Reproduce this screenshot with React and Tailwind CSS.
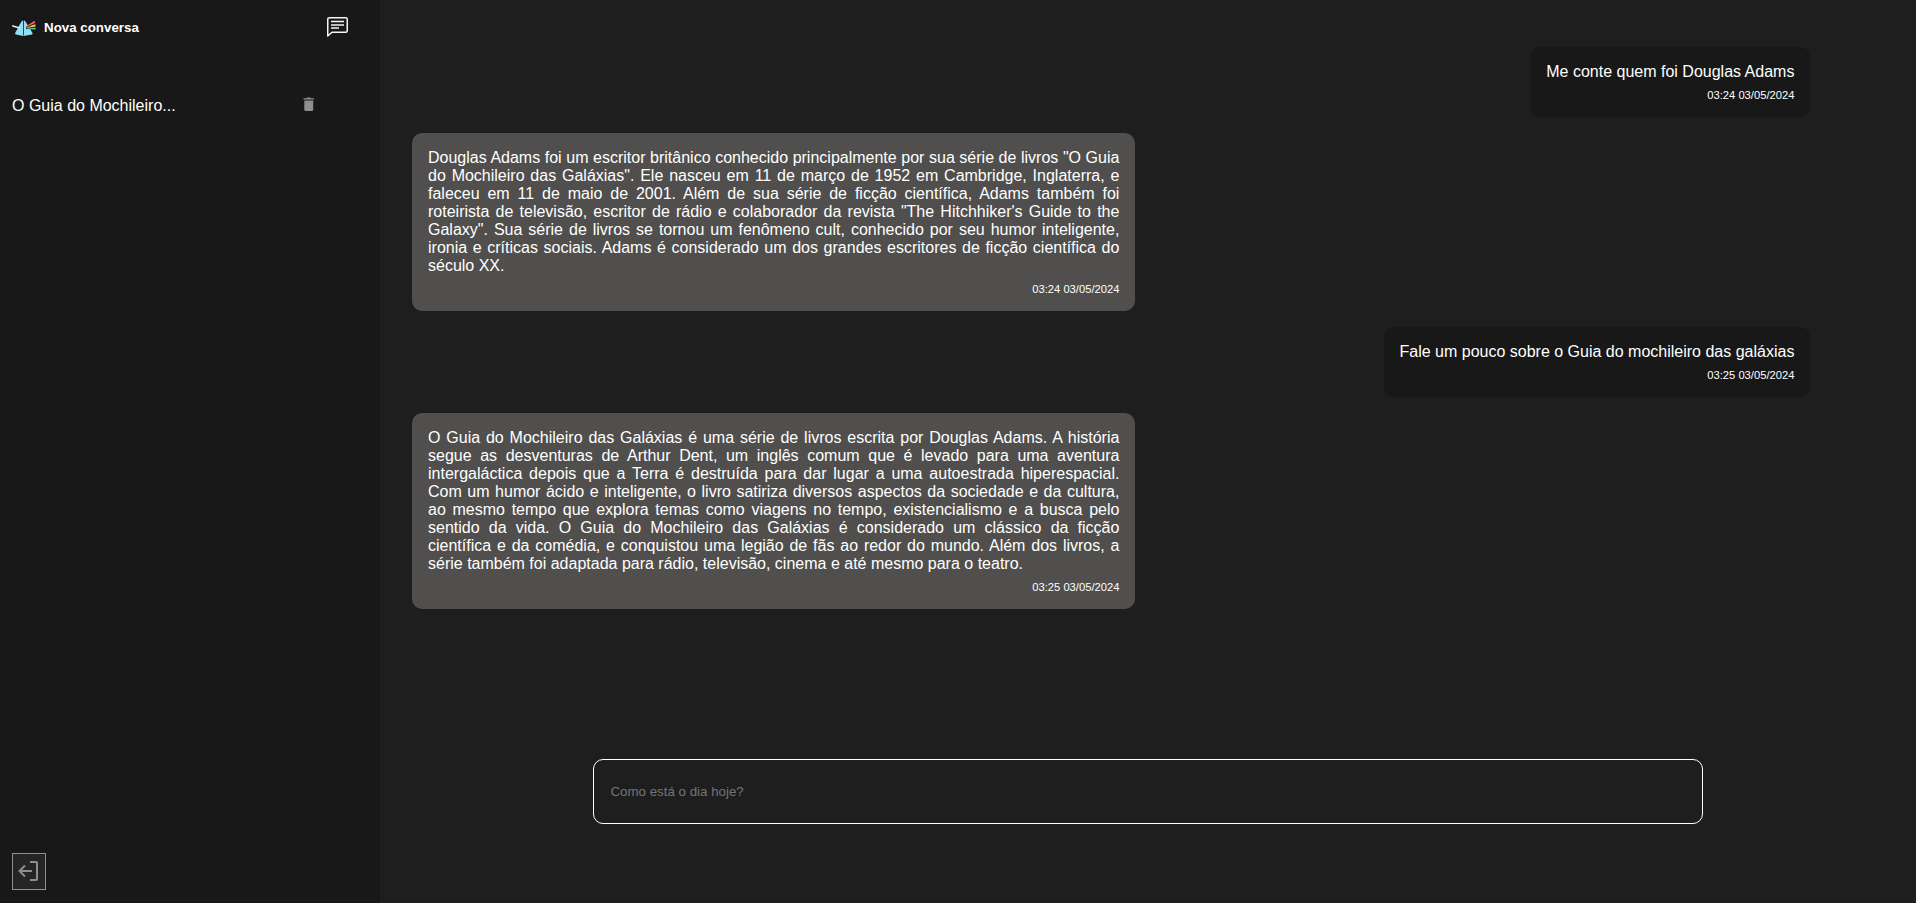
import React from "react";

const messages = [
  { mine: true, time: "03:24 03/05/2024", text: "Me conte quem foi Douglas Adams" },
  {
    mine: false,
    time: "03:24 03/05/2024",
    text: 'Douglas Adams foi um escritor britânico conhecido principalmente por sua série de livros "O Guia do Mochileiro das Galáxias". Ele nasceu em 11 de março de 1952 em Cambridge, Inglaterra, e faleceu em 11 de maio de 2001. Além de sua série de ficção científica, Adams também foi roteirista de televisão, escritor de rádio e colaborador da revista "The Hitchhiker\'s Guide to the Galaxy". Sua série de livros se tornou um fenômeno cult, conhecido por seu humor inteligente, ironia e críticas sociais. Adams é considerado um dos grandes escritores de ficção científica do século XX.',
  },
  { mine: true, time: "03:25 03/05/2024", text: "Fale um pouco sobre o Guia do mochileiro das galáxias" },
  {
    mine: false,
    time: "03:25 03/05/2024",
    text: "O Guia do Mochileiro das Galáxias é uma série de livros escrita por Douglas Adams. A história segue as desventuras de Arthur Dent, um inglês comum que é levado para uma aventura intergaláctica depois que a Terra é destruída para dar lugar a uma autoestrada hiperespacial. Com um humor ácido e inteligente, o livro satiriza diversos aspectos da sociedade e da cultura, ao mesmo tempo que explora temas como viagens no tempo, existencialismo e a busca pelo sentido da vida. O Guia do Mochileiro das Galáxias é considerado um clássico da ficção científica e da comédia, e conquistou uma legião de fãs ao redor do mundo. Além dos livros, a série também foi adaptada para rádio, televisão, cinema e até mesmo para o teatro.",
  },
];

function PrismLogo() {
  return (
    <svg width="24" height="20" viewBox="0 0 24 20" className="shrink-0">
      <path d="M11.500 1.500 8 7 3 16.200q0 1 1 1.200l7.500 1.600 8.500-1.600q1-.4.5-1.400L15 7Z" fill="#8fe0f7" />
      <path d="m10 3.200 1.500-3 1.500 3-1.500 1Z" fill="#0c0c0c" />
      <path d="M11.500 3v15.500" stroke="#2b4854" strokeWidth="1" />
      <path d="m0 8 8 2.200v1.600L.4 9.800Z" fill="#eeeeee" />
      <path d="m14 9.300 8.500-5.600.8 2.300L14 10.600Z" fill="#f0605f" />
      <path d="m14 10.600 9.200-3.500.3 2.400-9.500 2Z" fill="#f6d568" />
      <path d="m14 11.500 9.500-1.300.1 2.400-9.600-.3Z" fill="#52cf86" />
      <path d="m14 10.600 9.200-4M14 11.500l9.400-1.600" stroke="#181818" strokeWidth=".7" />
    </svg>
  );
}

function ChatIcon() {
  return (
    <svg width="22" height="21" viewBox="0 0 22 21" fill="none" stroke="#f4f4f4" strokeWidth="1.500" strokeLinejoin="round">
      <path d="M.75 19V2.200Q.75.750 2.200.750h16.600q1.450 0 1.450 1.450v11.600q0 1.450-1.450 1.450H5Z" />
      <path d="M4 4.600h13M4 7.900h13M4 11.100h8" />
    </svg>
  );
}

function TrashIcon() {
  return (
    <svg width="12" height="15" viewBox="0 0 12 15" fill="#8e8e8e">
      <path d="M.5 1.200h2.900L4.100.4h3.300l.7.8h2.900v1.400H.5Z" />
      <path d="M1.300 3.400h8.900v9q0 1.500-1.500 1.500H2.800q-1.500 0-1.500-1.500Z" />
    </svg>
  );
}

function LogoutIcon() {
  return (
    <svg width="22" height="21" viewBox="0 0 22 21" fill="none" stroke="#8e8e8e" strokeWidth="2">
      <path d="M14 10H1.500M7 4.500 1.500 10 7 15.500M12 1h6q1 0 1 1v16q0 1-1 1h-6" />
    </svg>
  );
}

function Message({ mine, text, time }) {
  return (
    <div
      className={
        mine
          ? "self-end rounded-[10px] bg-[#181818] p-4"
          : "w-[723.4px] self-start rounded-[10px] bg-[#504f4d] p-4"
      }
    >
      <p className="text-justify text-[16px] leading-[18px]">{text}</p>
      <p className="mt-2 text-right text-[11.2px] leading-[12px]">{time}</p>
    </div>
  );
}

export default function App() {
  return (
    <div className="flex h-screen overflow-hidden bg-[#1e1e1e] font-['Liberation_Sans',Arial,sans-serif] text-white">
      <aside className="flex w-[380px] shrink-0 flex-col bg-[#181818] px-3 pb-[13px] pt-[17px]">
        <header className="flex h-[21px] items-start justify-between pr-[19px]">
          <button className="flex items-start gap-2 text-[13.333px] font-bold leading-[22px]">
            <PrismLogo />
            Nova conversa
          </button>
          <button aria-label="Conversas">
            <ChatIcon />
          </button>
        </header>
        <nav className="mt-[59px] flex items-start justify-between pr-[53px]">
          <span className="text-[16px] leading-[18px]">O Guia do Mochileiro...</span>
          <button aria-label="Excluir">
            <TrashIcon />
          </button>
        </nav>
        <button
          aria-label="Sair"
          className="mt-auto flex h-[37px] w-[34px] items-start border border-[#8e8e8e] bg-[#252525] pl-[5px] pt-[7px]"
        >
          <LogoutIcon />
        </button>
      </aside>
      <main className="flex flex-1 flex-col">
        <section className="flex flex-1 flex-col gap-4 pl-8 pr-[105.6px] pt-[47px]">
          {messages.map((m, i) => (
            <Message key={i} {...m} />
          ))}
        </section>
        <form className="flex pb-[79px] pl-[213.4px]">
          <input
            placeholder="Como está o dia hoje?"
            className="h-[65px] w-[1109.6px] rounded-[10px] border border-white bg-transparent px-4 text-[13.333px] outline-none placeholder:text-[#757575]"
          />
        </form>
      </main>
    </div>
  );
}
